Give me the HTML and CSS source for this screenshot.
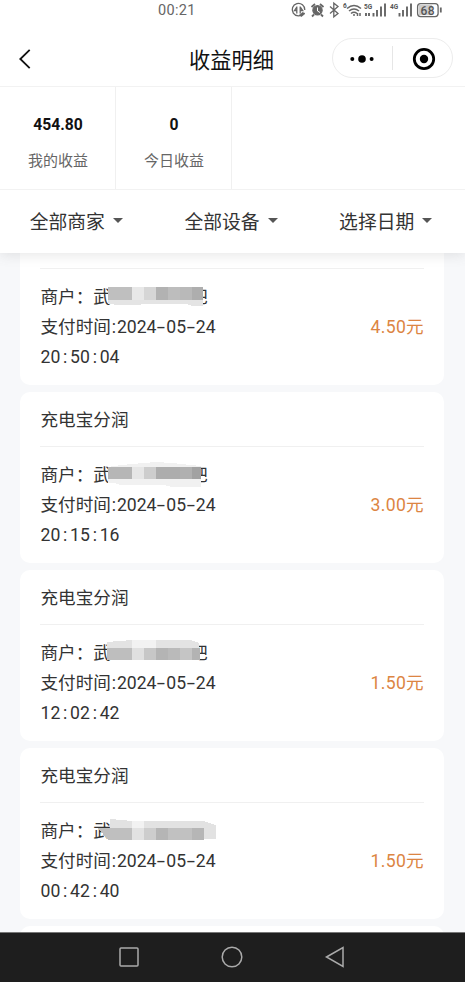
FILE: index.html
```html
<!DOCTYPE html>
<html lang="zh-CN">
<head>
<meta charset="utf-8">
<title>收益明细</title>
<link rel="stylesheet" href="styles.css">
</head>
<body>
<div class="phone">
  <header class="status">
    <span class="clock">00<i>:</i>21</span>
    <svg class="status-icons" width="155" height="20" viewBox="290 0 155 20" fill="none" stroke="#666" stroke-width="1.3">
      <path d="M303.500 13.500A6.300 6.300 0 1 1 304.800 10M296.800 6.500v7M296.800 7l-2.300 3.500h2.300M300.200 13.500v-7M300.200 7l2.500 3.500h-2.500"/><path d="M299.500 15l3-2.500 2.500 1-3.500 3z" fill="#666" stroke-width=".8"/>
      <circle cx="317.500" cy="10.300" r="4.600" fill="#666"/><path d="M311.500 7l3.500-3M323.500 7l-3.500-3M314 14.500l-2 2M321 14.500l2 2" stroke-width="1.800"/><path d="M317.500 7.500v3.500l2.500 1.500" stroke="#fff" stroke-width="1"/>
      <path d="M330 6.500l8 7-4.200 3.300V3.200L338 6.500l-8 7"/>
      <path d="M347 8.500q7-6 14 0M349 11q5-4 10 0M351 13.500q3-2.500 6 0" stroke-width="1.600"/><path d="M354 14v2M357.500 13v3M360 13v3" stroke-width="1.500"/>
      <path d="M366 13v3M369 13v3M373.500 13v3.500M377 10v6.500M381 6.500v10M385 3.500v13" stroke-width="1.900"/>
      <path d="M399.500 13v3.500M403 10v6.500M407 6.500v10M411 3.500v13" stroke-width="1.900"/>
      <rect x="417.600" y="3.600" width="20.500" height="13" rx="3"/><rect x="419" y="5" width="13" height="10.200" fill="#ccc" stroke="none"/><path d="M440.800 7.500v5" stroke-width="1.800"/>
      <g class="tiny"><text x="343" y="8">6</text><text x="364" y="8.500">5G</text><text x="390" y="8.500">4G</text></g>
      <text class="battery" x="420.500" y="14.500">68</text>
    </svg>
  </header>

  <nav class="titlebar">
    <svg class="back" width="14" height="22" viewBox="0 0 14 22" fill="none" stroke="#111" stroke-width="1.800"><path d="M11.700 1.800L2.300 11l9.400 9.200"/></svg>
    <h1>收益明细</h1>
    <div class="capsule">
      <svg width="59" height="38" viewBox="0 0 59 38"><circle cx="19.300" cy="20" r="2"/><circle cx="29" cy="20" r="3.800"/><circle cx="38.600" cy="20" r="2"/></svg>
      <span class="split"></span>
      <svg width="59" height="38" viewBox="0 0 59 38"><circle cx="31" cy="20" r="9.700" fill="none" stroke="#000" stroke-width="2.800"/><circle cx="31" cy="20" r="4.200"/></svg>
    </div>
  </nav>

  <section class="stats">
    <div class="stat"><b>454.80</b><span>我的收益</span></div>
    <div class="stat"><b>0</b><span>今日收益</span></div>
  </section>

  <section class="filters">
    <div class="filter">全部商家<i class="caret"></i></div>
    <div class="filter">全部设备<i class="caret"></i></div>
    <div class="filter">选择日期<i class="caret"></i></div>
  </section>

  <main class="list">
    <article class="card">
      <h2></h2>
      <div class="body">
        <div class="info">
          <p>商户：武<span class="hidden-name"><svg width="110" height="30" viewBox="0 0 110 30" shape-rendering="crispEdges"><path fill="#bfbfbf" d="M0 5h24v13H0z"/><path fill="#e8e8e8" d="M24 5h12v13H24z"/><path fill="#d6d6d6" d="M36 5h12v13H36z"/><path fill="#b2b2b2" d="M48 5h12v13H48z"/><path fill="#bdbdbd" d="M60 5h12v13H60z"/><path fill="#b9b9b9" d="M72 5h12v13H72z"/><path fill="#aeaeae" d="M84 5h11v13H84z"/><path fill="#e4e4e4" d="M0 18h95v6H84l-6-2H36l-6 1H12l-12-1z"/></svg></span><span class="tail">吧</span></p>
          <p>支付时间<i class="lead">:</i>2024<i class="dash">-</i>05<i class="dash">-</i>24</p>
          <p>20<i>:</i>50<i>:</i>04</p>
        </div>
        <strong>4.50元</strong>
      </div>
    </article>
    <article class="card">
      <h2>充电宝分润</h2>
      <div class="body">
        <div class="info">
          <p>商户：武<span class="hidden-name"><svg width="110" height="30" viewBox="0 0 110 30" shape-rendering="crispEdges"><path fill="#f1f1f1" d="M13 5l35-3 16 1 29 3v21H64l-8-2H12l-5-2H0V7z"/><path fill="#b6b6b6" d="M0 7h24v12H0z"/><path fill="#e6e6e6" d="M24 7h12v12H24z"/><path fill="#cdcdcd" d="M36 7h12v12H36z"/><path fill="#adadad" d="M48 7h24v12H48z"/><path fill="#b0b0b0" d="M72 7h12v12H72z"/><path fill="#a2a2a2" d="M84 7h9v12h-9z"/></svg></span><span class="tail">吧</span></p>
          <p>支付时间<i class="lead">:</i>2024<i class="dash">-</i>05<i class="dash">-</i>24</p>
          <p>20<i>:</i>15<i>:</i>16</p>
        </div>
        <strong>3.00元</strong>
      </div>
    </article>
    <article class="card">
      <h2>充电宝分润</h2>
      <div class="body">
        <div class="info">
          <p>商户：武<span class="hidden-name"><svg width="110" height="30" viewBox="0 0 110 30" shape-rendering="crispEdges"><path fill="#e3e3e3" d="M-1 4l25-2h59l8 3v6H-1z"/><path fill="#f2f2f2" d="M24 2h24v8H24z"/><path fill="#bebebe" d="M-1 10h25v12H-1z"/><path fill="#e0e0e0" d="M24 10h12v12H24z"/><path fill="#c7c7c7" d="M36 10h12v12H36z"/><path fill="#b4b4b4" d="M48 10h12v12H48z"/><path fill="#bababa" d="M60 10h12v12H60z"/><path fill="#c5c5c5" d="M72 10h12v12H72z"/><path fill="#b3b3b3" d="M84 10h8v12h-8z"/></svg></span><span class="tail">吧</span></p>
          <p>支付时间<i class="lead">:</i>2024<i class="dash">-</i>05<i class="dash">-</i>24</p>
          <p>12<i>:</i>02<i>:</i>42</p>
        </div>
        <strong>1.50元</strong>
      </div>
    </article>
    <article class="card">
      <h2>充电宝分润</h2>
      <div class="body">
        <div class="info">
          <p>商户：武<span class="hidden-name"><svg width="110" height="30" viewBox="0 0 110 30" shape-rendering="crispEdges"><path fill="#e2e2e2" d="M2 3l22 2h71l13 4v14H94V13H2z"/><path fill="#f2f2f2" d="M24 5h12v8H24z"/><path fill="#bfbfbf" d="M-10 12h34v12H0z"/><path fill="#e2e2e2" d="M24 12h12v12H24z"/><path fill="#cdcdcd" d="M36 12h12v12H36z"/><path fill="#b5b5b5" d="M48 12h12v12H48z"/><path fill="#c1c1c1" d="M60 12h24v12H60z"/><path fill="#b6b6b6" d="M84 12h12v12H84z"/></svg></span></p>
          <p>支付时间<i class="lead">:</i>2024<i class="dash">-</i>05<i class="dash">-</i>24</p>
          <p>00<i>:</i>42<i>:</i>40</p>
        </div>
        <strong>1.50元</strong>
      </div>
    </article>
    <article class="card"></article>
  </main>

  <footer class="navbar">
    <svg width="24" height="24" viewBox="0 0 24 24"><rect x="3" y="3" width="18" height="18" rx="1"/></svg>
    <svg width="24" height="24" viewBox="0 0 24 24"><circle cx="12" cy="12" r="9.800"/></svg>
    <svg width="24" height="24" viewBox="0 0 24 24"><path d="M3.500 12L20 2.500v19z"/></svg>
  </footer>
</div>
</body>
</html>
```
FILE: styles.css
```css
* { box-sizing: border-box; }
body { margin: 0; background: #fff; }
i { font-style: normal; }
.phone {
  width: 465px;
  height: 982px;
  display: flex;
  flex-direction: column;
  overflow: hidden;
  font-family: Roboto, "Noto Sans CJK SC", sans-serif;
  color: #333;
}
.status {
  height: 20px;
  flex: none;
  display: flex;
  justify-content: space-between;
  padding: 0 20px 0 158px;
}
.clock { font-size: 14.5px; line-height: 21px; letter-spacing: 0.3px; color: #666; }
.status-icons { flex: none; }
.status-icons text { stroke: none; fill: #555; font-weight: 700; }
.tiny { font-size: 6.5px; }
.status-icons .battery { font-size: 12px; font-weight: 500; letter-spacing: 0.5px; }

.titlebar {
  height: 67px;
  flex: none;
  display: grid;
  grid-template-columns: 1fr auto 1fr;
  align-items: center;
  padding: 10px 12px 0 18px;
  border-bottom: 1px solid #f2f2f2;
}
.back { margin-top: 2px; }
.titlebar h1 { margin: 0; font-size: 21.2px; font-weight: 400; color: #111; transform: translateX(-4px); }
.capsule {
  justify-self: end;
  width: 121px;
  height: 40px;
  display: flex;
  align-items: center;
  border: 1px solid #ececec;
  border-radius: 20px;
}
.capsule svg { flex: none; }
.split { width: 1px; height: 24px; flex: none; background: #e6e6e6; }

.stats { height: 103px; flex: none; display: flex; border-bottom: 1px solid #f2f2f2; }
.stat {
  width: 116px;
  display: flex;
  flex-direction: column;
  align-items: center;
  gap: 14px;
  padding: 27px 0 0 1px;
  border-right: 1px solid #f0f0f0;
}
.stat b { font-size: 15.7px; line-height: 22px; font-weight: 700; color: #111; }
.stat span { font-size: 15px; line-height: 22px; color: #666; }

.filters {
  position: relative;
  z-index: 1;
  height: 63px;
  flex: none;
  display: flex;
  padding: 0 1px 2px 0;
  background: #fff;
  box-shadow: 0 2px 12px rgba(100, 101, 102, 0.16);
  clip-path: inset(0 0 -20px 0);
}
.filter {
  flex: 1;
  display: flex;
  align-items: center;
  justify-content: center;
  padding-right: 2px;
  font-size: 18.8px;
}
.caret {
  margin-left: 8px;
  border: 5.500px solid transparent;
  border-top-color: #555;
  border-bottom: 0;
}

.list {
  flex: 1;
  min-height: 0;
  overflow: hidden;
  padding: 0 21px 0 20px;
  background: #f7f8fa;
}
.card {
  height: 171px;
  margin-bottom: 7px;
  padding: 0 20px;
  background: #fff;
  border-radius: 10px;
}
.card:first-child { margin-top: -39px; }
.card h2 {
  height: 55px;
  margin: 0;
  padding-left: 0.5px;
  border-bottom: 1px solid #f0f0f0;
  font-size: 17.6px;
  line-height: 57px;
  font-weight: 400;
}
.body { display: flex; align-items: center; justify-content: space-between; padding-top: 13.4px; }
.info { padding-left: 0.5px; }
.info p { height: 30px; margin: 0; display: flex; font-size: 17.6px; line-height: 30px; }
.info i { width: 9.800px; text-align: center; }
.info .lead { width: 6px; }
.info .dash { transform: scaleX(1.700); }
.hidden-name { position: relative; z-index: 1; width: 79px; }
.hidden-name svg { position: absolute; left: -2.9px; top: 0; overflow: visible; }
.body strong { font-size: 17.6px; line-height: 30px; letter-spacing: 0.3px; font-weight: 400; color: #dc8543; }

.navbar {
  height: 50px;
  flex: none;
  display: flex;
  justify-content: center;
  gap: 79px;
  align-items: center;
  padding: 0 1px 1px 0;
  background: #1e1e1e;
  border-top: 1px solid #777;
}
.navbar svg { fill: none; stroke: #aaa; stroke-width: 1.500; }
```
